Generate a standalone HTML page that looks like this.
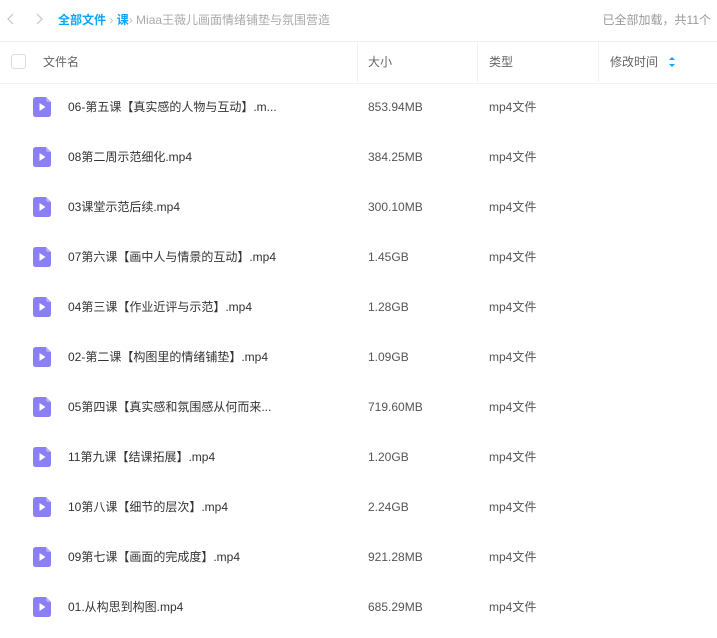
<!DOCTYPE html>
<html><head><meta charset="utf-8"><style>
body{margin:0;width:717px;height:638px;background:#fff;font-family:"Liberation Sans","Noto Sans CJK SC",sans-serif;font-size:12px;color:#333;overflow:hidden;position:relative}
.a{position:absolute;white-space:nowrap;line-height:16px}
.hdr{position:absolute;left:0;top:41px;width:717px;height:41px;border-top:1px solid #f1f2f4;border-bottom:1px solid #f1f2f4}
.sep{position:absolute;top:41px;width:1px;height:41px;background:#f1f2f4}
.icon{position:absolute;left:33px;width:18px;height:20px}
</style></head><body>
<svg class="a" style="left:6px;top:12px" width="10" height="14"><path d="M7 2L2 7L7 12" stroke="#ccc" stroke-width="1.3" fill="none"/></svg>
<svg class="a" style="left:34px;top:12px" width="10" height="14"><path d="M3 2L8 7L3 12" stroke="#ccc" stroke-width="1.3" fill="none"/></svg>
<div class="a" style="left:58px;top:12px;color:#06a7ff;font-weight:bold">全部文件<span style="color:#bbb;font-weight:normal"> ›</span> 课<span style="color:#bbb;font-weight:normal">›</span> <span style="color:#aaa;font-weight:normal">Miaa王薇儿画面情绪铺垫与氛围营造</span></div>
<div class="a" style="right:6px;top:12px;color:#999">已全部加载，共11个</div>
<div class="hdr"></div>
<div class="sep" style="left:357px"></div><div class="sep" style="left:477px"></div><div class="sep" style="left:598px"></div>
<div class="a" style="left:11px;top:54px;width:13px;height:13px;border:1px solid #ddd;border-radius:3px"></div>
<div class="a" style="left:43px;top:54px;color:#666">文件名</div>
<div class="a" style="left:368px;top:54px;color:#666">大小</div>
<div class="a" style="left:489px;top:54px;color:#666">类型</div>
<div class="a" style="left:610px;top:54px;color:#666">修改时间</div>
<svg class="a" style="left:668px;top:56px" width="8" height="12"><path d="M4 1L7 4H1Z M4 11L7 8H1Z" fill="#06a7ff"/></svg>
<div id="rows"></div>
<script>
var d=[["06-第五课【真实感的人物与互动】.m...","853.94MB"],["08第二周示范细化.mp4","384.25MB"],["03课堂示范后续.mp4","300.10MB"],["07第六课【画中人与情景的互动】.mp4","1.45GB"],["04第三课【作业近评与示范】.mp4","1.28GB"],["02-第二课【构图里的情绪铺垫】.mp4","1.09GB"],["05第四课【真实感和氛围感从何而来...","719.60MB"],["11第九课【结课拓展】.mp4","1.20GB"],["10第八课【细节的层次】.mp4","2.24GB"],["09第七课【画面的完成度】.mp4","921.28MB"],["01.从构思到构图.mp4","685.29MB"]];
var h="";d.forEach(function(r,i){var y=107+50*i;
h+='<svg class="icon" style="top:'+(y-10)+'px" viewBox="0 0 18 20"><path d="M3 0H13L18 5V17Q18 20 15 20H3Q0 20 0 17V3Q0 0 3 0Z" fill="#8b80f3"/><path d="M13 0V3Q13 5 15 5H18Z" fill="#b3abf7"/><path d="M6.5 6L12.5 10L6.5 14Z" fill="#fff"/></svg>';
h+='<div class="a" style="left:68px;top:'+(y-8)+'px">'+r[0]+'</div><div class="a" style="left:368px;top:'+(y-8)+'px;color:#555">'+r[1]+'</div><div class="a" style="left:489px;top:'+(y-8)+'px;color:#555">mp4文件</div>';});
document.getElementById("rows").innerHTML=h;
</script>
</body></html>
